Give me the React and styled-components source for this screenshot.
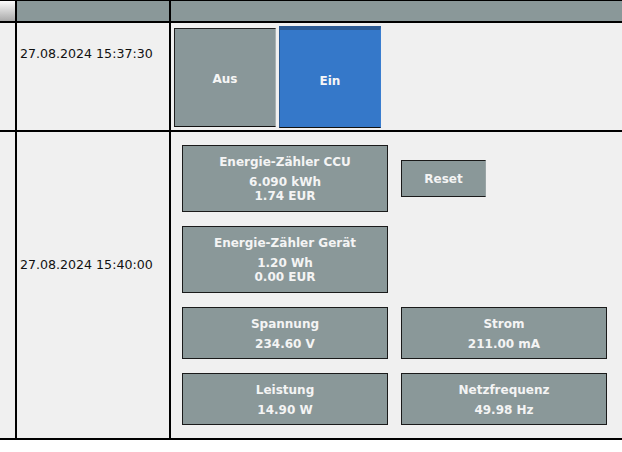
import React from "react";
import styled, { createGlobalStyle } from "styled-components";

const GlobalStyle = createGlobalStyle`
  body {
    margin: 0;
    background: #ffffff;
    font-family: "DejaVu Sans", Verdana, sans-serif;
  }
`;

const Table = styled.div`
  display: grid;
  grid-template-columns: 15px 152px 451px;
  grid-template-rows: 20px 107px 306px;
  gap: 2px;
  padding: 1px 0 2px 0;
  background: #000;
  width: 622px;
`;

const HeadCorner = styled.div`
  background: linear-gradient(#fbfbfb, #a9a9a9);
`;

const HeadCell = styled.div`
  background: #8a9899;
`;

const Side = styled.div`
  background: #f0f0f0;
`;

const DateCell = styled.div`
  background: #f0f0f0;
  padding: ${(p) => p.top}px 0 0 3px;
  font-size: 12.6px;
  line-height: 15px;
  color: #111;
`;

const Content = styled.div`
  background: #f0f0f0;
`;

const Switches = styled.div`
  display: flex;
  align-items: center;
  gap: 3px;
  padding: 3px 0 0 3px;
  height: 102px;
`;

const SwitchButton = styled.div`
  width: 102px;
  height: ${(p) => (p.active ? 102 : 99)}px;
  box-sizing: border-box;
  padding-top: 4px;
  display: flex;
  align-items: center;
  justify-content: center;
  font-weight: bold;
  font-size: 12px;
  color: #f6f6f6;
  background: ${(p) => (p.active ? "#3578c9" : "#899799")};
  border: 1px solid ${(p) => (p.active ? "#2b5a93" : "#1e1e1e")};
  border-top-width: ${(p) => (p.active ? 4 : 1)}px;
  border-right-color: ${(p) => (p.active ? "#3a7dcf" : "#aab3b4")};
  border-bottom-color: #111;
`;

const Tiles = styled.div`
  display: grid;
  grid-template-columns: 206px 206px;
  column-gap: 13px;
  row-gap: 14px;
  padding: 13px 0 0 11px;
`;

const Tile = styled.div`
  height: ${(p) => p.h}px;
  box-sizing: border-box;
  padding-top: 9px;
  background: #8a9899;
  border: 1px solid #1a1a1a;
  color: #f4f4f4;
  font-weight: bold;
  font-size: 12px;
  text-align: center;
`;

const Title = styled.div`
  line-height: 15px;
  margin-bottom: 5px;
`;

const Value = styled.div`
  line-height: 14px;
`;

const ResetButton = styled.div`
  align-self: center;
  justify-self: start;
  width: 85px;
  height: 37px;
  box-sizing: border-box;
  display: flex;
  align-items: center;
  justify-content: center;
  background: #8a9899;
  border: 1px solid #1a1a1a;
  border-right-color: #9aa5a6;
  color: #f4f4f4;
  font-weight: bold;
  font-size: 12px;
`;

const readings = [
  { title: "Spannung", value: "234.60 V" },
  { title: "Strom", value: "211.00 mA" },
  { title: "Leistung", value: "14.90 W" },
  { title: "Netzfrequenz", value: "49.98 Hz" },
];

export default function App() {
  return (
    <>
      <GlobalStyle />
      <Table>
        <HeadCorner />
        <HeadCell />
        <HeadCell />

        <Side />
        <DateCell top={23}>27.08.2024 15:37:30</DateCell>
        <Content>
          <Switches>
            <SwitchButton>Aus</SwitchButton>
            <SwitchButton active>Ein</SwitchButton>
          </Switches>
        </Content>

        <Side />
        <DateCell top={125}>27.08.2024 15:40:00</DateCell>
        <Content>
          <Tiles>
            <Tile h={67}>
              <Title>Energie-Zähler CCU</Title>
              <Value>6.090 kWh</Value>
              <Value>1.74 EUR</Value>
            </Tile>
            <ResetButton>Reset</ResetButton>
            <Tile h={67}>
              <Title>Energie-Zähler Gerät</Title>
              <Value>1.20 Wh</Value>
              <Value>0.00 EUR</Value>
            </Tile>
            <div />
            {readings.map((r) => (
              <Tile key={r.title} h={52}>
                <Title>{r.title}</Title>
                <Value>{r.value}</Value>
              </Tile>
            ))}
          </Tiles>
        </Content>
      </Table>
    </>
  );
}
